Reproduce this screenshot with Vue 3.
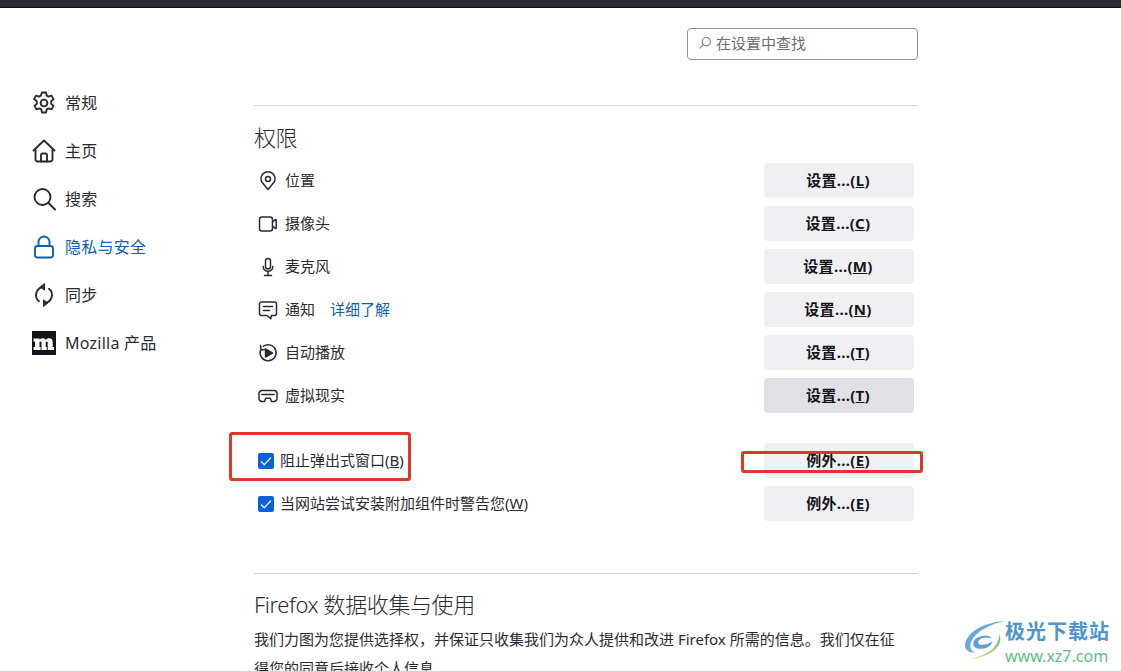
<script setup>
const navItems = [
  { label: '常规', icon: 'gear' },
  { label: '主页', icon: 'home' },
  { label: '搜索', icon: 'search' },
  { label: '隐私与安全', icon: 'lock', active: true },
  { label: '同步', icon: 'sync' },
  { label: 'Mozilla 产品', icon: 'moz' }
]
const permissions = [
  { label: '位置', icon: 'pin', key: 'L' },
  { label: '摄像头', icon: 'cam', key: 'C' },
  { label: '麦克风', icon: 'mic', key: 'M' },
  { label: '通知', icon: 'note', key: 'N', link: '详细了解' },
  { label: '自动播放', icon: 'play', key: 'T' },
  { label: '虚拟现实', icon: 'vr', key: 'T', hover: true }
]
</script>

<template>
  <div class="page">
    <div class="topbar"></div>
    <div class="layout">
      <nav class="sidebar">
        <div v-for="item in navItems" :key="item.label" class="nav-item" :class="{ active: item.active }">
          <svg class="nav-icon" viewBox="0 0 24 24" fill="none" stroke="currentColor" stroke-width="1.900" stroke-linejoin="round" stroke-linecap="round">
            <template v-if="item.icon === 'gear'">
              <path d="M10 1.500h4l.7 3.100 1.800 1 3-1 2 3.500-2.300 2.100v2.600l2.300 2.100-2 3.500-3-1-1.800 1-.7 3.100h-4l-.7-3.100-1.800-1-3 1-2-3.500 2.300-2.100v-2.600L2 8.100l2-3.500 3 1 1.800-1z" />
              <circle cx="12" cy="12" r="3.400" />
            </template>
            <template v-else-if="item.icon === 'home'">
              <path d="M1.500 11.500 12 1.500l10.500 10M3.500 10v10a2.500 2.500 0 0 0 2.500 2.500h12a2.500 2.500 0 0 0 2.500-2.500V10" />
              <path d="M9 22.500V16a1.500 1.500 0 0 1 1.500-1.500h3A1.500 1.500 0 0 1 15 16v6.500" />
            </template>
            <template v-else-if="item.icon === 'search'">
              <circle cx="10.500" cy="10" r="8" />
              <path d="m16.500 16 6.500 6.500" />
            </template>
            <template v-else-if="item.icon === 'lock'">
              <path d="M6.500 11V7a5.500 5.500 0 0 1 11 0v4" />
              <rect x="3" y="11" width="18" height="11.500" rx="2.500" />
            </template>
            <template v-else-if="item.icon === 'sync'">
              <path d="M7 18.200A8 8 0 0 1 12 4M17 5.800A8 8 0 0 1 12 20" />
              <path d="M12.500 .8v6.400L8.500 4zM11.500 23.200v-6.400l4 3.200z" fill="currentColor" stroke-width="1" />
            </template>
            <template v-else>
              <rect x="0" y="0" width="24" height="24" fill="#15141a" stroke="none" />
              <path d="M1.500 7.500h6v1.300c.9-1 2-1.500 3.200-1.500 1.500 0 2.500.6 3 1.700 1-1.100 2.200-1.700 3.500-1.700 2.300 0 3.500 1.300 3.500 3.600V16h1.300v3h-6.300v-7.200c0-.8-.3-1.200-.9-1.200-.5 0-.9.200-1.100.5V16h1v3H9.500v-7.200c0-.8-.3-1.200-.9-1.200-.5 0-.9.200-1.100.5V16h1.100v3H1.500v-3H3v-5.500H1.500z" fill="#fff" stroke="none" />
            </template>
          </svg>
          <span class="nav-text">{{ item.label }}</span>
        </div>
      </nav>

      <main class="content">
        <div class="search-row">
          <div class="search-box">
            <svg class="search-icon" viewBox="0 0 16 16" fill="none" stroke="#75757c" stroke-width="1.200" stroke-linecap="round">
              <circle cx="9.500" cy="6.500" r="4.700" />
              <path d="M6 10 2 14" />
            </svg>
            <span>在设置中查找</span>
          </div>
        </div>

        <section class="section">
          <h2>权限</h2>
          <div class="perm-list">
            <div v-for="p in permissions" :key="p.label" class="row">
              <div class="row-label">
                <svg class="perm-icon" viewBox="0 0 20 20" fill="none" stroke="#2b2a33" stroke-width="1.500" stroke-linejoin="round" stroke-linecap="round">
                  <template v-if="p.icon === 'pin'">
                    <path d="M10 18.500 4.200 11.600a7.200 7.200 0 0 1-1.200-3.800 7 7 0 0 1 14 0c0 1.400-.4 2.700-1.200 3.800z" />
                    <circle cx="10" cy="8" r="2.500" />
                  </template>
                  <template v-else-if="p.icon === 'cam'">
                    <rect x="1.500" y="3" width="13" height="14" rx="2.500" />
                    <path d="m14.500 8 2.800-2.300a.5.5 0 0 1 .9.400v7.800a.5.5 0 0 1-.9.400L14.500 12" />
                  </template>
                  <template v-else-if="p.icon === 'mic'">
                    <rect x="7.500" y="1.500" width="5" height="10.500" rx="2.500" />
                    <path d="M5.200 9.500a4.800 4.800 0 0 0 9.600 0M10 14.500v4M6.500 18.500h7" />
                  </template>
                  <template v-else-if="p.icon === 'note'">
                    <path d="M3.500 2h13A2 2 0 0 1 18.500 4v9.500a2 2 0 0 1-2 2h-3l-.8 3.200L9 15.500H3.500a2 2 0 0 1-2-2V4a2 2 0 0 1 2-2z" />
                    <path d="M5.500 6.500h9M5.500 10.500h6" />
                  </template>
                  <template v-else-if="p.icon === 'play'">
                    <path d="M5.500 3.200A8 8 0 1 1 2.600 7" />
                    <path d="M2.500 2.500 3 7l4-.5" />
                    <path d="M7.500 6 14.500 10l-7 4z" fill="#2b2a33" />
                  </template>
                  <template v-else>
                    <path d="M4 4.500h12a3 3 0 0 1 3 3v5a3 3 0 0 1-3 3h-2.500l-1.200-3.200h-4.600L6.500 15.500H4a3 3 0 0 1-3-3v-5a3 3 0 0 1 3-3z" />
                    <path d="M4 8.500h12" />
                  </template>
                </svg>
                <span class="row-text">{{ p.label }}</span>
                <a v-if="p.link" class="link row-text">{{ p.link }}</a>
              </div>
              <button class="btn" :class="{ hover: p.hover }">设置...(<u>{{ p.key }}</u>)</button>
            </div>
          </div>

          <div class="check-list">
            <div class="row">
              <label class="check-label">
                <span class="checkbox"><svg viewBox="0 0 16 16" fill="none" stroke="#e6f0ff" stroke-width="1.300"><path d="m3 8.500 3.300 3.300L13 4.500" /></svg></span>
                <span class="row-text">阻止弹出式窗口(<u>B</u>)</span>
              </label>
              <button class="btn">例外...(<u>E</u>)</button>
            </div>
            <div class="row">
              <label class="check-label">
                <span class="checkbox"><svg viewBox="0 0 16 16" fill="none" stroke="#e6f0ff" stroke-width="1.300"><path d="m3 8.500 3.300 3.300L13 4.500" /></svg></span>
                <span class="row-text">当网站尝试安装附加组件时警告您(<u>W</u>)</span>
              </label>
              <button class="btn">例外...(<u>E</u>)</button>
            </div>
          </div>
        </section>

        <section class="section data">
          <h2>Firefox 数据收集与使用</h2>
          <p>我们力图为您提供选择权，并保证只收集我们为众人提供和改进 Firefox 所需的信息。我们仅在征得您的同意后接收个人信息。</p>
        </section>
      </main>
    </div>

    <div class="mark mark-left"></div>
    <div class="mark mark-right"></div>

    <div class="watermark">
      <svg class="wm-logo" viewBox="0 0 44 44">
        <defs>
          <linearGradient id="wmGreen" x1="1" y1="0" x2="0" y2="1">
            <stop offset="0" stop-color="#6fbf8f" />
            <stop offset="1" stop-color="#e3dc7a" />
          </linearGradient>
        </defs>
        <path d="M44 1C28 2 9 8 3 22c-3 8 2 13 10 12-5-2-7-6-4-12C14 11 30 4 44 1z" fill="#6aa9dc" />
        <path d="M13 20c6-5 15-5 17-1-5-1-10-1-13 2-2 2-1 5 2 5 5 0 9-1 12-4-1 6-9 9-15 8-6-1-7-6-3-10z" fill="#5f9fd6" />
        <path d="M38 15c4 9-3 17-12 21-6 3-13 5-18 4 8-1 19-5 24-11 4-4 6-9 6-14z" fill="url(#wmGreen)" />
      </svg>
      <div class="wm-text">
        <div class="wm-name">极光下载站</div>
        <div class="wm-url">www.xz7.com</div>
      </div>
    </div>
  </div>
</template>

<style scoped>
.page {
  position: relative;
  width: 1121px;
  height: 671px;
  overflow: hidden;
  background: #fff;
  color: #2b2a33;
  font-family: "Noto Sans", "Noto Sans CJK SC", sans-serif;
  font-size: 15px;
}
.topbar {
  height: 7px;
  background: #2b2a33;
  border-bottom: 1px solid #111;
}
.layout {
  display: flex;
}
.sidebar {
  width: 222px;
  padding: 71px 0 0 32px;
}
.nav-item {
  display: flex;
  align-items: center;
  gap: 9px;
  height: 48px;
  font-size: 16px;
}
.nav-item.active {
  color: #0b62b5;
}
.nav-icon {
  width: 24px;
  height: 24px;
  flex: none;
}
.nav-text {
  margin-bottom: 2px;
  letter-spacing: .25px;
}
.content {
  width: 664px;
}
.search-row {
  display: flex;
  justify-content: flex-end;
  padding-top: 20px;
}
.search-box {
  display: flex;
  align-items: center;
  gap: 4px;
  width: 231px;
  height: 32px;
  box-sizing: border-box;
  padding: 0 0 3px 10px;
  border: 1px solid #8f8f9d;
  border-radius: 4px;
  color: #6d6d75;
  font-size: 15px;
}
.search-icon {
  width: 14px;
  height: 14px;
}
.section {
  border-top: 1px solid #d7d7db;
  margin-top: 45px;
  padding-top: 14px;
}
h2 {
  margin: 0;
  font-size: 22px;
  font-weight: 300;
  line-height: 35px;
  letter-spacing: -.4px;
}
.perm-list {
  display: flex;
  flex-direction: column;
  gap: 8px;
  margin-top: 8px;
}
.row {
  display: flex;
  align-items: center;
  justify-content: space-between;
  height: 35px;
  padding-right: 4px;
}
.row-label {
  display: flex;
  align-items: center;
  gap: 7px;
  font-size: 15px;
}
.row-text {
  margin-bottom: 2px;
}
.perm-icon {
  width: 20px;
  height: 20px;
  margin-left: 4px;
}
.link {
  margin-left: 8px;
  color: #0b62b5;
}
.btn {
  width: 150px;
  height: 35px;
  border: none;
  border-radius: 4px;
  background: #f0f0f4;
  color: #15141a;
  font-family: inherit;
  font-size: 15px;
  font-weight: 700;
  letter-spacing: .3px;
  padding: 0 2px 3px 0;
}
.btn.hover {
  background: #e0e0e6;
}
.check-list {
  display: flex;
  flex-direction: column;
  gap: 8px;
  margin-top: 30px;
}
.check-label {
  display: flex;
  align-items: center;
  gap: 6px;
  margin-left: 4px;
  font-size: 15px;
}
.checkbox {
  display: flex;
  width: 16px;
  height: 16px;
  border-radius: 2px;
  background: #0b62d6;
}
.data {
  margin-top: 52px;
  padding-top: 13px;
}
.data p {
  margin: 3px 10px 0 0;
  font-size: 15px;
  line-height: 29px;
}
.mark {
  position: absolute;
  border: 3px solid #e1352b;
  border-radius: 3px;
  box-sizing: border-box;
}
.mark-left {
  left: 229px;
  top: 432px;
  width: 182px;
  height: 49px;
}
.mark-right {
  left: 741px;
  top: 451px;
  width: 182px;
  height: 22px;
}
.watermark {
  position: absolute;
  right: 11px;
  bottom: 3px;
  display: flex;
  align-items: flex-start;
}
.wm-logo {
  width: 42px;
  height: 42px;
}
.wm-text {
  display: flex;
  flex-direction: column;
}
.wm-name {
  color: #4f93cf;
  font-size: 20px;
  font-weight: 700;
  line-height: 24px;
  letter-spacing: 1px;
}
.wm-url {
  color: #5cbf7f;
  font-size: 16px;
  line-height: 24px;
}
</style>
